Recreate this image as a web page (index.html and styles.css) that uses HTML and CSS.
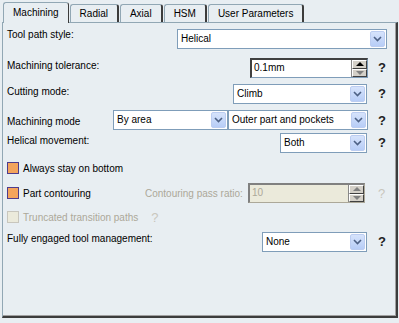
FILE: index.html
```html
<!DOCTYPE html>
<html>
    <head>
        <meta charset="utf-8">
        <title>Machining</title>
        <link rel="stylesheet" href="styles.css">
    </head>
    <body>
        <div class="tabs">
            <div class="tab active">Machining</div>
            <div class="tab">Radial</div>
            <div class="tab">Axial</div>
            <div class="tab">HSM</div>
            <div class="tab">User Parameters</div>
        </div>
        <div class="panel">
            <div class="row r1">
                <span class="label">Tool path style:</span>
                <div class="combo w-style"><span class="val">Helical</span><span class="drop"><svg width="9" height="6" viewBox="0 0 9 6"><path d="M1 1 L4.5 4.5 L8 1" fill="none" stroke="#4d6185" stroke-width="1.6"/></svg></span></div>
            </div>
            <div class="row r2">
                <span class="label">Machining tolerance:</span>
                <div class="spin w-tol"><span class="val">0.1mm</span><span class="arrows"><i class="up"></i><i class="down"></i></span></div>
                <span class="help">?</span>
            </div>
            <div class="row r3">
                <span class="label">Cutting mode:</span>
                <div class="combo w-cut"><span class="val">Climb</span><span class="drop"><svg width="9" height="6" viewBox="0 0 9 6"><path d="M1 1 L4.5 4.5 L8 1" fill="none" stroke="#4d6185" stroke-width="1.6"/></svg></span></div>
                <span class="help">?</span>
            </div>
            <div class="row r4">
                <span class="label">Machining mode</span>
                <div class="combo w-area"><span class="val">By area</span><span class="drop"><svg width="9" height="6" viewBox="0 0 9 6"><path d="M1 1 L4.5 4.5 L8 1" fill="none" stroke="#4d6185" stroke-width="1.6"/></svg></span></div>
                <div class="combo w-outer"><span class="val">Outer part and pockets</span><span class="drop"><svg width="9" height="6" viewBox="0 0 9 6"><path d="M1 1 L4.5 4.5 L8 1" fill="none" stroke="#4d6185" stroke-width="1.6"/></svg></span></div>
                <span class="help">?</span>
            </div>
            <div class="row r5">
                <span class="label">Helical movement:</span>
                <div class="combo w-both"><span class="val">Both</span><span class="drop"><svg width="9" height="6" viewBox="0 0 9 6"><path d="M1 1 L4.5 4.5 L8 1" fill="none" stroke="#4d6185" stroke-width="1.6"/></svg></span></div>
                <span class="help">?</span>
            </div>
            <div class="row r6">
                <span class="check"></span>
                <span class="label">Always stay on bottom</span>
            </div>
            <div class="row r7">
                <span class="check"></span>
                <span class="label">Part contouring</span>
                <span class="label off ratio">Contouring pass ratio:</span>
                <div class="spin off w-ratio"><span class="val">10</span><span class="arrows"><i class="up"></i><i class="down"></i></span></div>
                <span class="help off">?</span>
            </div>
            <div class="row r8">
                <span class="check off"></span>
                <span class="label off">Truncated transition paths</span>
                <span class="help off q8">?</span>
            </div>
            <div class="row r9">
                <span class="label">Fully engaged tool management:</span>
                <div class="combo w-none"><span class="val">None</span><span class="drop"><svg width="9" height="6" viewBox="0 0 9 6"><path d="M1 1 L4.5 4.5 L8 1" fill="none" stroke="#4d6185" stroke-width="1.6"/></svg></span></div>
                <span class="help">?</span>
            </div>
        </div>
    </body>
</html>
```

FILE: styles.css
```css
body {
    margin: 0;
    background-color: #e8eef2;
    font-family: "Liberation Sans", Arial, sans-serif;
    font-size: 10px;
    color: #000;
    width: 399px;
    height: 323px;
    overflow: hidden;
}
.tabs {
    display: flex;
    height: 22px;
    padding-left: 3px;
    align-items: flex-end;
}
.tab {
    height: 18px;
    line-height: 17px;
    padding: 0 9px;
    margin-right: 1px;
    border: 1px solid #91a7b4;
    border-bottom: none;
    border-right: 2px solid #3c3c3c;
    border-radius: 3px 3px 0 0;
    box-sizing: border-box;
}
.tab.active {
    height: 21px;
    line-height: 19px;
    padding: 0 9px;
    margin-bottom: -1px;
    background-color: #e8eef2;
    border-right: 1px solid #3c3c3c;
    position: relative;
}
.panel {
    margin: 0 1px 0 2px;
    height: 296px;
    box-sizing: border-box;
    border: 1px solid #91a7b4;
    border-right: 2px solid #3c3c3c;
    border-bottom: 2px solid #3c3c3c;
    box-shadow: inset -1px -1px 0 #a0a0a0;
    padding: 0 0 0 4px;
}
.row {
    display: flex;
    align-items: flex-start;
    height: 20px;
    position: relative;
}
.row .label {
    margin-top: 2px;
}
.r1 { margin-top: 6px; }
.r1 .label { margin-top: 0; }
.r2 { margin-top: 9px; }
.r3 { margin-top: 6px; }
.r4 { margin-top: 6px; align-items: center; }
.r4 .label { margin-top: 2px; }
.r5 { margin-top: 3px; }
.r6 { margin-top: 8px; align-items: center; height: 14px; }
.r7 { margin-top: 8px; align-items: center; }
.r8 { margin-top: 4px; align-items: center; }
.r6 .label, .r7 .label, .r8 .label { margin-top: 0; }
.r9 { margin-top: 5px; }
.r9 .label { margin-top: 1px; }
.label {
    white-space: nowrap;
}
.off {
    color: #aca899;
}
.combo, .spin {
    display: flex;
    height: 20px;
    box-sizing: border-box;
    border: 1px solid #7f9db9;
    background-color: #fff;
}
.val {
    flex: 1;
    line-height: 18px;
    padding-left: 3px;
    white-space: nowrap;
    overflow: hidden;
}
.drop {
    width: 15px;
    margin: 1px;
    display: flex;
    align-items: center;
    justify-content: center;
    background: linear-gradient(#d6e3fb, #b7cdf7);
    border: 1px solid #bccdf1;
    border-radius: 2px;
    box-sizing: border-box;
}
.help {
    position: absolute;
    left: 371px;
    top: 2px;
    font-size: 13px;
    font-weight: bold;
    color: #222;
}
.help.off {
    color: #c8c6bd;
    font-weight: normal;
}
.r4 .help, .r7 .help { top: auto; }
.w-style { margin-left: auto; margin-right: 9px; width: 210px; }
.w-tol { position: absolute; left: 243px; width: 118px; }
.w-cut { position: absolute; left: 226px; width: 134px; }
.w-area { position: absolute; left: 106px; width: 115px; }
.w-outer { position: absolute; left: 221px; width: 140px; }
.w-both { position: absolute; left: 273px; width: 87px; }
.w-ratio { position: absolute; left: 241px; width: 117px; }
.w-none { position: absolute; left: 255px; width: 105px; }
.spin {
    border: 1px solid #7f9db9;
    border-top: 2px solid #404040;
    border-left: 2px solid #404040;
}
.spin .val {
    line-height: 16px;
    padding-left: 2px;
}
.spin.off {
    background-color: #ebeadb;
    border-color: #aca899;
    border-top-color: #808080;
    border-left-color: #808080;
}
.arrows {
    width: 15px;
    display: flex;
    flex-direction: column;
    border-left: 1px solid #888;
}
.arrows i {
    flex: 1;
    background-color: #d4d0c8;
    border: 1px solid;
    border-color: #fff #404040 #404040 #fff;
    position: relative;
}
.arrows i::after {
    content: "";
    position: absolute;
    left: 3px;
    border-left: 4px solid transparent;
    border-right: 4px solid transparent;
}
.arrows .up::after { top: 1px; border-bottom: 4px solid #000; }
.arrows .down::after { top: 1px; border-top: 4px solid #808080; }
.spin.off .arrows .up::after { border-bottom-color: #808080; }
.check {
    width: 12px;
    height: 12px;
    box-sizing: border-box;
    border: 1px solid #4f3c8c;
    background-color: #f4a45c;
    margin: 0 4px 0 0;
}
.check.off {
    border-color: #c8c6bd;
    background-color: #ebeadb;
}
.ratio {
    position: absolute;
    left: 138px;
}
.q8 {
    position: static;
    margin-left: 13px;
}
```
